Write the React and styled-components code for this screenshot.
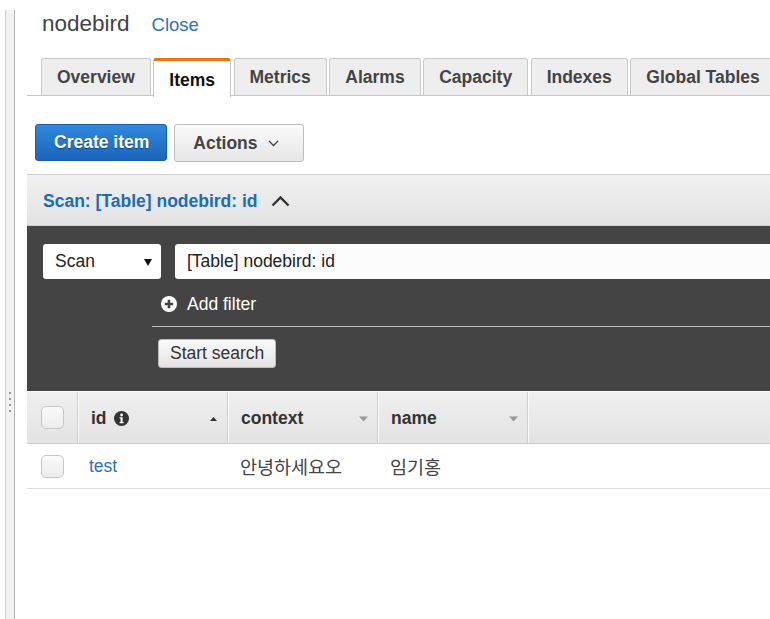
import React from "react";
import styled, { createGlobalStyle } from "styled-components";

const Global = createGlobalStyle`
  html, body { margin: 0; padding: 0; background: #fff; }
  body { font-family: "Liberation Sans", Arial, "Noto Sans CJK KR", sans-serif; color: #444; }
  * { box-sizing: border-box; }
`;

const Page = styled.div`
  display: flex;
  height: 619px;
  width: 770px;
  overflow: hidden;
`;

const Splitter = styled.div`
  flex: 0 0 10px;
  margin: 10px 0 0 5px;
  background: #f1f1f1;
  border-left: 1px solid #cfcfcf;
  border-right: 1px solid #b4b4b4;
  display: flex;
  flex-direction: column;
  align-items: center;
  padding-top: 382px;
  gap: 4px;
`;

const Dot = styled.span`
  width: 2px;
  height: 2px;
  background: #999;
`;

const Main = styled.div`
  flex: 1;
  min-width: 0;
  margin-left: 12px;
  overflow: hidden;
`;

const TitleRow = styled.div`
  display: flex;
  align-items: baseline;
  gap: 22px;
  height: 58px;
  padding: 11px 0 0 15px;
`;

const Title = styled.span`
  font-size: 22.5px;
  color: #444;
`;

const Link = styled.a`
  color: ${(p) => p.$color || "#2a73b9"};
  font-size: ${(p) => p.$size || "17px"};
  text-decoration: none;
`;

const TabStrip = styled.div`
  display: flex;
  gap: 2.5px;
  padding-left: 14px;
  border-bottom: 1px solid #c6c6c6;
  height: 38px;
  width: 900px;
`;

const Tab = styled.div`
  flex: none;
  height: ${(p) => (p.$active ? "39px" : "37px")};
  padding: ${(p) => (p.$active ? "3px 15px 0" : "1px 15px 0")};
  display: flex;
  align-items: center;
  font-size: 17.5px;
  font-weight: bold;
  color: ${(p) => (p.$active ? "#111" : "#444")};
  background: ${(p) => (p.$active ? "#fff" : "#eee")};
  border: 1px solid #c8c8c8;
  border-bottom: none;
  border-top: ${(p) => (p.$active ? "3px solid #e47911" : "1px solid #c8c8c8")};
  border-radius: 3px 3px 0 0;
  position: relative;
  z-index: 1;
`;

const Toolbar = styled.div`
  display: flex;
  gap: 7px;
  padding: 28px 0 0 8px;
  height: 78px;
`;

const Button = styled.button`
  height: 37px;
  display: flex;
  align-items: center;
  gap: 10px;
  font-family: inherit;
  font-size: 17.5px;
  font-weight: bold;
  border-radius: 3px;
  cursor: pointer;
  padding: ${(p) => p.$pad || "0 18px"};
`;

const PrimaryButton = styled(Button)`
  color: #fff;
  background: linear-gradient(#3089dd, #1b64b9);
  border: 1px solid #1a5ca9;
  text-shadow: 0 1px 1px rgba(0, 0, 0, 0.4);
`;

const SecondaryButton = styled(Button)`
  color: #444;
  height: 38px;
  background: linear-gradient(#fafafa, #e6e6e6);
  border: 1px solid #bdbdbd;
`;

const ScanPanel = styled.section`
  border-top: 1px solid #cdcdcd;
  width: 760px;
`;

const ScanHeader = styled.div`
  height: 51px;
  display: flex;
  align-items: center;
  gap: 13px;
  padding: 2px 0 0 16px;
  background: linear-gradient(#f1f1f1, #e2e2e2);
  border-bottom: 1px solid #d0d0d0;
`;

const ScanTitle = styled.span`
  color: #1d6db6;
  font-size: 17.5px;
  font-weight: bold;
`;

const Dark = styled.div`
  background: #444;
  padding: 18px 0 0 16px;
  height: 165px;
`;

const QueryRow = styled.div`
  display: flex;
  gap: 14px;
`;

const Select = styled.div`
  width: 118px;
  height: 35px;
  background: #fff;
  border-radius: 3px;
  display: flex;
  align-items: center;
  justify-content: space-between;
  padding: 0 9px 0 12px;
  font-size: 17.5px;
  color: #222;
`;

const Input = styled.div`
  flex: 1;
  height: 35px;
  background: #fcfcfc;
  border-radius: 3px 0 0 3px;
  display: flex;
  align-items: center;
  padding-left: 12px;
  font-size: 17.5px;
  color: #222;
`;

const FilterArea = styled.div`
  margin-left: 109px;
`;

const AddFilter = styled.div`
  height: 48px;
  display: flex;
  align-items: center;
  gap: 10px;
  padding: 3px 0 0 9px;
  color: #fff;
  font-size: 17.5px;
  border-bottom: 1px solid #bdbdbd;
`;

const SmallButton = styled.button`
  margin: 12px 0 0 6px;
  height: 29px;
  padding: 0 11px;
  font-family: inherit;
  font-size: 17.5px;
  color: #333;
  background: linear-gradient(#fafafa, #e3e3e3);
  border: 1px solid #bbb;
  border-radius: 3px;
`;

const Table = styled.div`
  width: 760px;
`;

const HeadRow = styled.div`
  display: grid;
  grid-template-columns: 50px 150px 150px 150px 1fr;
  height: 53px;
  background: linear-gradient(#efefef, #e3e3e3);
  border-top: 1px solid #fafafa;
  border-bottom: 1px solid #cbcbcb;
`;

const BodyRow = styled.div`
  display: grid;
  grid-template-columns: 50px 150px 150px 150px 1fr;
  height: 45px;
  border-bottom: 1px solid #dedede;
`;

const CheckCell = styled.div`
  display: flex;
  align-items: center;
  padding-left: 14px;
`;

const Checkbox = styled.span`
  width: 23px;
  height: 23px;
  border-radius: 5px;
  border: 1px solid #c6c6c6;
  background: linear-gradient(#fafafa, #ececec);
`;

const HeadCell = styled.div`
  display: flex;
  align-items: center;
  gap: 7px;
  padding: 2px 9px 0 13px;
  border-left: 1px solid #cfcfcf;
  box-shadow: inset 1px 0 #fafafa;
  font-size: 17.5px;
  font-weight: bold;
  color: #333;
`;

const Spacer = styled.span`
  flex: 1;
`;

const Cell = styled.div`
  display: flex;
  align-items: center;
  padding-left: ${(p) => p.$pad || "13px"};
  font-size: ${(p) => p.$size || "17px"};
  color: #444;
`;

const SortArrow = ({ up, color }) => (
  <svg width="9" height="6" viewBox="0 0 9 6">
    {up ? (
      <polygon points="1,5 8,5 4.5,1" fill={color} />
    ) : (
      <polygon points="0,0.5 9,0.5 4.5,5.5" fill={color} />
    )}
  </svg>
);

const InfoIcon = () => (
  <svg width="15" height="15" viewBox="0 0 15 15">
    <circle cx="7.5" cy="7.5" r="7.5" fill="#333" />
    <circle cx="7.6" cy="4" r="1.4" fill="#fff" />
    <path d="M5.6 6.3h3v4.6h1v1.3H5.6v-1.3h1V7.6h-1z" fill="#fff" />
  </svg>
);

const PlusCircle = () => (
  <svg width="16" height="16" viewBox="0 0 16 16">
    <circle cx="8" cy="8" r="8" fill="#fff" />
    <path d="M8 3.8v8.4M3.8 8h8.4" stroke="#444" strokeWidth="2.6" />
  </svg>
);

const ChevronDown = () => (
  <svg width="11" height="7" viewBox="0 0 11 7">
    <path d="M1 1l4.5 4.5L10 1" fill="none" stroke="#444" strokeWidth="1.3" />
  </svg>
);

const ChevronUp = () => (
  <svg width="19" height="12" viewBox="0 0 19 12">
    <path d="M1.5 10.5l8-8 8 8" fill="none" stroke="#333" strokeWidth="2.4" />
  </svg>
);

const Caret = () => (
  <svg width="8" height="8" viewBox="0 0 8 8">
    <polygon points="0,1 8,1 4,8" fill="#111" />
  </svg>
);

const tabs = ["Overview", "Items", "Metrics", "Alarms", "Capacity", "Indexes", "Global Tables"];

export default function App() {
  return (
    <>
      <Global />
      <Page>
        <Splitter>
          <Dot />
          <Dot />
          <Dot />
          <Dot />
        </Splitter>
        <Main>
          <TitleRow>
            <Title>nodebird</Title>
            <Link $size="18.5px">Close</Link>
          </TitleRow>
          <TabStrip>
            {tabs.map((t) => (
              <Tab key={t} $active={t === "Items"}>
                {t}
              </Tab>
            ))}
          </TabStrip>
          <Toolbar>
            <PrimaryButton $pad="0 17px 0 18px">Create item</PrimaryButton>
            <SecondaryButton $pad="0 24px 0 18px">
              Actions <ChevronDown />
            </SecondaryButton>
          </Toolbar>
          <ScanPanel>
            <ScanHeader>
              <ScanTitle>Scan: [Table] nodebird: id</ScanTitle>
              <ChevronUp />
            </ScanHeader>
            <Dark>
              <QueryRow>
                <Select>
                  Scan <Caret />
                </Select>
                <Input>[Table] nodebird: id</Input>
              </QueryRow>
              <FilterArea>
                <AddFilter>
                  <PlusCircle />
                  Add filter
                </AddFilter>
                <SmallButton>Start search</SmallButton>
              </FilterArea>
            </Dark>
          </ScanPanel>
          <Table>
            <HeadRow>
              <CheckCell>
                <Checkbox />
              </CheckCell>
              <HeadCell>
                id <InfoIcon />
                <Spacer />
                <SortArrow up color="#333" />
              </HeadCell>
              <HeadCell>
                context
                <Spacer />
                <SortArrow color="#9a9a9a" />
              </HeadCell>
              <HeadCell>
                name
                <Spacer />
                <SortArrow color="#9a9a9a" />
              </HeadCell>
              <HeadCell />
            </HeadRow>
            <BodyRow>
              <CheckCell>
                <Checkbox />
              </CheckCell>
              <Cell $pad="12px">
                <Link $size="17.5px">test</Link>
              </Cell>
              <Cell $size="18.5px">안녕하세요오</Cell>
              <Cell $size="18.5px">임기홍</Cell>
              <Cell />
            </BodyRow>
          </Table>
        </Main>
      </Page>
    </>
  );
}
